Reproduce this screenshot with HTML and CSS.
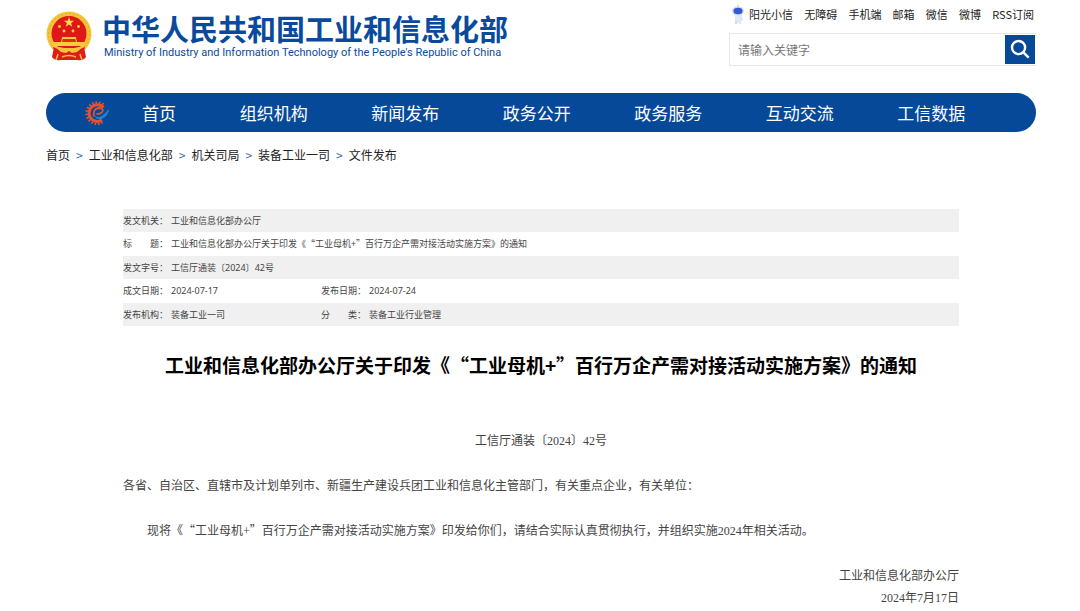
FILE: index.html
```html
<!DOCTYPE html>
<html lang="zh-CN">
<head>
<meta charset="utf-8">
<meta name="viewport" content="width=device-width, initial-scale=1">
<title>中华人民共和国工业和信息化部</title>
<link rel="stylesheet" href="styles.css">
</head>
<body>
<div class="page">
  <header class="header">
    <a class="brand" href="#">
      <svg class="emblem" viewBox="0 0 46 51" aria-hidden="true">
        <path d="M8 36 L6 46 Q9 50 15 49 L31 49 Q37 50 40 46 L38 36Z" fill="#e01b1c"/>
        <circle cx="23" cy="23" r="22.5" fill="#f5c437"/>
        <circle cx="23" cy="23" r="20.5" fill="none" stroke="#e7a92c" stroke-width="1" stroke-dasharray="2 2"/>
        <circle cx="23" cy="22.500" r="17.500" fill="#e01719"/>
        <path d="M23 6l1.300 3.700h3.900l-3.100 2.400 1.100 3.700-3.200-2.200-3.200 2.200 1.100-3.700-3.100-2.400h3.900z" fill="#ffd84d"/>
        <g fill="#ffcf3f"><circle cx="13.500" cy="15.500" r="1.400"/><circle cx="18" cy="20" r="1.400"/><circle cx="27" cy="20" r="1.400"/><circle cx="32.500" cy="15.500" r="1.400"/></g>
        <path d="M16 27h14l1 4h7v4H8v-4h7z" fill="#f8cb3c"/>
        <path d="M17 27h12l1 4H16z" fill="#e5281d"/>
        <path d="M16 26h14v2H16z" fill="#f8cb3c"/>
        <path d="M7 36q8 4 16 2 8 2 16-2l-2 9q-7 4-14 1-7 3-14-1z" fill="#e01b1c"/>
        <path d="M8 35l10 2h10l10-2-7 6-5 1-3-2-3 2-5-1z" fill="#f6c43a"/>
        <path d="M12 43l-2 6M34 43l2 6M16 46q7-3 14 0" fill="none" stroke="#f6c43a" stroke-width="1.500"/>
      </svg>
      <span class="brand-text">
        <span class="brand-cn">中华人民共和国工业和信息化部</span>
        <span class="brand-en">Ministry of Industry and Information Technology of the People's Republic of China</span>
      </span>
    </a>
    <div class="tools">
      <nav class="quick" aria-label="快捷入口">
        <a class="mascot-link" href="#"><svg class="mascot" viewBox="0 0 12 19" aria-hidden="true">
          <path d="M6 0v3" stroke="#f3dc8b" stroke-width="2"/>
          <path d="M3 9h7l1 6-2 1v3H7l-1-2-1 2H3z" fill="#dce9f6"/>
          <ellipse cx="6" cy="6" rx="6" ry="4.500" fill="#cfdcf2"/>
          <ellipse cx="6" cy="6" rx="4.500" ry="3.200" fill="#3657d6"/>
          <path d="M4 16v3" stroke="#f0cfae" stroke-width="1.500"/>
        </svg>阳光小信</a>
        <a href="#">无障碍</a>
        <a href="#">手机端</a>
        <a href="#">邮箱</a>
        <a href="#">微信</a>
        <a href="#">微博</a>
        <a href="#">RSS订阅</a>
      </nav>
      <form class="search">
        <input class="search-input" type="text" placeholder="请输入关键字" aria-label="请输入关键字">
        <button class="search-button" type="button" aria-label="搜索"><svg viewBox="0 0 30 30" aria-hidden="true"><circle cx="13.500" cy="13" r="6.800"/><path d="M18.500 18l5.500 5.500"/></svg></button>
      </form>
    </div>
  </header>

  <nav class="mainnav" aria-label="主导航">
    <svg class="gear" viewBox="0 0 26 26" aria-hidden="true">
      <path d="M19.500 4.500A10.700 10.700 0 1 0 18.500 22.500" fill="none" stroke="#e8502a" stroke-width="2.400" stroke-dasharray="1.700 1.700"/>
      <path d="M19.500 7.500A8.300 8.300 0 1 0 18 20" fill="none" stroke="#e8502a" stroke-width="3"/>
      <path d="M10 16.500Q8.500 9 14.500 8 20 8 18.500 11.500 17 14 12.500 14" fill="none" stroke="#e8502a" stroke-width="1.800"/>
      <path d="M10.500 15.500Q14 19 18.500 15.500 22 12.500 24.500 9.500 25.500 10 24.500 12 21 19 15.500 19.300 11.500 19 10.500 15.500z" fill="#1c86cc"/>
    </svg>
    <a class="home" href="#">首页</a>
    <a href="#">组织机构</a>
    <a href="#">新闻发布</a>
    <a href="#">政务公开</a>
    <a href="#">政务服务</a>
    <a href="#">互动交流</a>
    <a href="#">工信数据</a>
  </nav>

  <nav class="crumbs" aria-label="当前位置">
    <a href="#">首页</a><span class="sep">&gt;</span><a href="#">工业和信息化部</a><span class="sep">&gt;</span><a href="#">机关司局</a><span class="sep">&gt;</span><a href="#">装备工业一司</a><span class="sep">&gt;</span><a href="#">文件发布</a>
  </nav>

  <main class="article">
    <table class="meta">
      <colgroup><col class="col-label"><col class="col-value"><col class="col-label"><col></colgroup>
      <tbody>
        <tr><th scope="row">发文机关：</th><td colspan="3">工业和信息化部办公厅</td></tr>
        <tr><th scope="row">标　　题：</th><td colspan="3">工业和信息化部办公厅关于印发《“工业母机+”百行万企产需对接活动实施方案》的通知</td></tr>
        <tr><th scope="row">发文字号：</th><td colspan="3">工信厅通装〔<span class="num">2024</span>〕<span class="num">42</span>号</td></tr>
        <tr><th scope="row">成文日期：</th><td class="num">2024-07-17</td><th scope="row">发布日期：</th><td class="num">2024-07-24</td></tr>
        <tr><th scope="row">发布机构：</th><td>装备工业一司</td><th scope="row">分　　类：</th><td>装备工业行业管理</td></tr>
      </tbody>
    </table>
    <h1 class="title">工业和信息化部办公厅关于印发《“工业母机+”百行万企产需对接活动实施方案》的通知</h1>
    <div class="content">
      <p class="docno">工信厅通装〔<span class="serif">2024</span>〕<span class="serif">42</span>号</p>
      <p>各省、自治区、直辖市及计划单列市、新疆生产建设兵团工业和信息化主管部门，有关重点企业，有关单位：</p>
      <p class="indent">现将《“工业母机<span class="serif">+</span>”百行万企产需对接活动实施方案》印发给你们，请结合实际认真贯彻执行，并组织实施<span class="serif">2024</span>年相关活动。</p>
      <p class="sign">工业和信息化部办公厅<br><span class="serif">2024</span>年<span class="serif">7</span>月<span class="serif">17</span>日</p>
    </div>
  </main>
</div>
</body>
</html>
```
FILE: styles.css
```css
* { box-sizing: border-box; }

body {
  margin: 0;
  background: #fff;
  color: #222;
  font-family: "Noto Sans CJK SC", "Noto Sans", sans-serif;
  font-size: 12px;
  text-spacing-trim: space-all;
}

a { color: inherit; text-decoration: none; white-space: nowrap; }

.page { padding: 0 44px 0 46px; }

.header {
  display: flex;
  justify-content: space-between;
  align-items: flex-start;
  height: 93px;
}

.brand { display: flex; gap: 10px; padding-top: 10px; color: #0a4a9c; }
.emblem { width: 46px; height: 51px; margin-top: 1px; }
.brand-text { display: flex; flex-direction: column; }
.brand-cn { font-size: 29px; line-height: 36px; font-weight: 700; }
.brand-en {
  padding-left: 2px;
  font-family: Roboto, sans-serif;
  font-size: 11px;
  line-height: 14px;
  font-weight: 400;
}

.tools { width: 307px; padding-top: 4px; }
.quick {
  display: flex;
  justify-content: space-between;
  align-items: center;
  padding: 0 2px 0 3px;
  font-size: 11px;
  line-height: 20px;
}
.mascot-link { display: flex; align-items: center; gap: 5px; }
.mascot { width: 12px; height: 19px; }

.search { display: flex; align-items: center; margin-top: 9px; height: 33px; padding-right: 1px; border: 1px solid #e6e6e6; border-right: 0; }
.search-input {
  flex: 1;
  min-width: 0;
  height: 31px;
  padding: 0 8px;
  border: 0;
  background: #fff;
  font: inherit;
}
.search-input::placeholder { color: #777; opacity: 1; }
.search-button { width: 30px; height: 29px; padding: 0; border: 0; background: #064998; }
.search-button svg { display: block; width: 30px; height: 29px; fill: none; stroke: #fff; stroke-width: 2.5; }

.mainnav {
  display: flex;
  align-items: center;
  height: 39px;
  padding: 0 39px 0 38px;
  border-radius: 20px;
  background: #064998;
  color: #fff;
  font-size: 17px;
}
.gear { flex: none; width: 26px; height: 26px; }
.mainnav a { flex: 1; text-align: center; }
.mainnav .home { flex: 0 0 98px; }

.crumbs { display: flex; flex-wrap: wrap; gap: 6px; padding-top: 13px; line-height: 20px; }
.sep { color: #3a6ea8; }

.article { margin: 44px 77px 0; }

.meta { width: 100%; table-layout: fixed; border-collapse: collapse; color: #444; font-size: 9px; line-height: 14px; }
.col-label { width: 48px; }
.col-value { width: 150px; }
.meta tr { height: 24px; }
.meta tr:nth-child(odd) { height: 23px; background: #f0f0f0; }
.meta th, .meta td { padding: 0; font-weight: 400; text-align: left; white-space: nowrap; }
.num { font-family: "Noto Sans", sans-serif; }

.title {
  margin: 25px 0 0;
  color: #000;
  font-size: 19px;
  line-height: 28px;
  font-weight: 700;
  text-align: center;
}

.content { margin-top: 50px; color: #444; line-height: 22px; }
.content p { margin: 0 0 23px; }
.serif { font-family: "Liberation Serif", serif; line-height: 1; }
.content .docno { text-align: center; }
.indent { text-indent: 2em; }
.content .sign { margin: 0; text-align: right; }
```
